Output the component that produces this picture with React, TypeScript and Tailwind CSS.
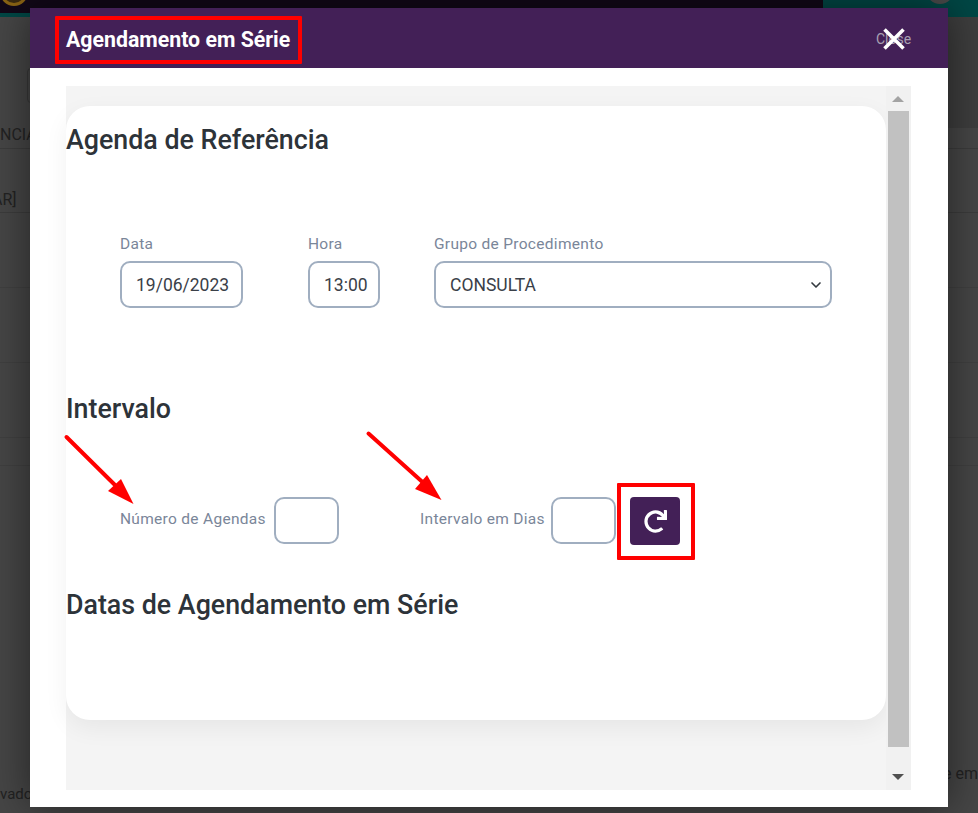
import React from "react";
import { FaRedo } from "react-icons/fa";
import { ChevronDown } from "lucide-react";

const inputClass =
  "h-[47px] rounded-[10px] border-2 border-[#a0aec0] bg-white pt-[1px] pr-0 pl-[14px] text-[17.5px] text-[#3a4048] outline-none";
const labelClass = "text-[15.5px] leading-[18px] tracking-[0.3px] text-[#7a8699]";
const headingClass = "text-[26.8px] leading-[32px] font-medium text-[#2d3339]";

const Field = ({ label, value, width }: { label: string; value: string; width: string }) => (
  <div className="flex flex-col">
    <label className={`mb-[8px] h-[18px] ${labelClass}`}>{label}</label>
    <input readOnly value={value} className={`${inputClass} ${width}`} />
  </div>
);

const Backdrop = () => (
  <div className="flex h-[813px] flex-col bg-[#464646] text-[#222222]">
    <div className="flex h-[13px] bg-[#120818]">
      <div className="flex-1" />
      <div className="w-[155px] bg-[#004745]" />
    </div>
    <div className="h-[4px] bg-[#004745]" />
    <div className="flex h-[132px] items-end justify-between border-b border-[#3c3c3c] pb-[1px] text-[16px]">
      <span>NCIA</span>
      <div className="mb-[-1px] h-[111px] w-[30px] self-start bg-[#3e3e3e]" />
    </div>
    <div className="flex h-[64px] items-end overflow-hidden border-b border-[#3c3c3c] text-[16px]">
      <span className="ml-[-8px]">AR]</span>
    </div>
    <div className="h-[75px] border-b border-[#404040]" />
    <div className="h-[75px] border-b border-[#404040]" />
    <div className="h-[75px] border-b border-[#404040]" />
    <div className="h-[28px] border-b border-[#404040]" />
    <div className="flex h-[320px] items-end justify-end text-[16px]">
      <span>e em</span>
    </div>
    <div className="mt-[-3px] flex-1 text-[15px]">
      <span>vado</span>
    </div>
  </div>
);

const Scrollbar = () => (
  <div className="flex w-[25px] shrink-0 flex-col items-center bg-[#f1f1f1] pr-[1px]">
    <div className="flex h-[25px] items-center">
      <div className="h-0 w-0 border-x-[6px] border-b-[6px] border-x-transparent border-b-[#a3a3a3]" />
    </div>
    <div className="w-[21px] flex-1 bg-[#c1c1c1]" />
    <div className="flex h-[43px] items-center pt-[17px]">
      <div className="h-0 w-0 border-x-[6px] border-t-[6px] border-x-transparent border-t-[#505050]" />
    </div>
  </div>
);

const Modal = () => (
  <div className="absolute top-[8px] left-[30px] flex h-[799px] w-[918px] flex-col bg-white shadow-[0_0_40px_rgba(0,0,0,0.5)]">
    <div className="flex h-[60px] shrink-0 items-center justify-between bg-[#432057] pr-[38px] pl-[36px]">
      <h5 className="pt-[4px] text-[21.3px] font-bold text-white">Agendamento em Série</h5>
      <div className="relative flex h-[24px] w-[33px] items-center justify-center pt-[2px]">
        <span className="text-[14px] text-[#a9a1b3]">Close</span>
        <svg viewBox="0 0 22 22" className="absolute top-[2px] left-[6px] h-[22px] w-[22px]">
          <path d="M1.5 1.5 L20.5 20.5 M20.5 1.5 L1.5 20.5" stroke="#ffffff" strokeWidth="3.6" fill="none" />
        </svg>
      </div>
    </div>

    <div className="mt-[18px] mr-[37px] ml-[36px] flex h-[704px] bg-[#f4f4f4]">
      <div className="flex-1 pt-[20px]">
        <div className="h-[614px] rounded-[24px] bg-white shadow-[0_8px_24px_rgba(0,0,0,0.06)]">
          <h3 className={`pt-[18px] ${headingClass}`}>Agenda de Referência</h3>
          <div className="mt-[79px] flex pl-[54px]">
            <Field label="Data" value="19/06/2023" width="w-[123px]" />
            <div className="ml-[65px]">
              <Field label="Hora" value="13:00" width="w-[72px]" />
            </div>
            <div className="ml-[54px] flex flex-col">
              <label className={`mb-[8px] h-[18px] ${labelClass}`}>Grupo de Procedimento</label>
              <div className={`${inputClass} flex w-[398px] items-center justify-between !pr-[6px]`}>
                <span>CONSULTA</span>
                <ChevronDown size={16} strokeWidth={2.5} className="text-[#343a40]" />
              </div>
            </div>
          </div>
          <h3 className={`mt-[85px] ${headingClass}`}>Intervalo</h3>
          <div className="mt-[72px] flex items-center pl-[54px]">
            <label className={`w-[154px] pb-[4px] ${labelClass}`}>Número de Agendas</label>
            <input readOnly className={`${inputClass} w-[65px] self-start`} />
            <label className={`ml-[81px] w-[131px] pb-[4px] ${labelClass}`}>Intervalo em Dias</label>
            <input readOnly className={`${inputClass} w-[65px] self-start`} />
            <button className="ml-[14px] flex h-[48px] w-[50px] items-center justify-center rounded-[4px] bg-[#432057] text-white">
              <FaRedo size={23} />
            </button>
          </div>
          <h3 className={`mt-[44px] ${headingClass}`}>Datas de Agendamento em Série</h3>
        </div>
      </div>
      <Scrollbar />
    </div>
  </div>
);

// marcações vermelhas feitas por cima da captura
const Annotations = () => (
  <>
    <div className="absolute top-[16px] left-[55px] h-[48px] w-[247px] rounded-[1px] border-4 border-[#ff0000]" />
    <div className="absolute top-[483px] left-[617px] h-[77px] w-[78px] rounded-[1px] border-4 border-[#ff0000]" />
    <svg className="absolute inset-0 h-[813px] w-[978px]" viewBox="0 0 978 813" fill="none">
      <path d="M66.5 437 L120 490" stroke="#ff0000" strokeWidth="4" strokeLinecap="round" />
      <path d="M133.5 504 L108 491 L121 479 Z" fill="#ff0000" />
      <path d="M368.5 433.5 L428 487" stroke="#ff0000" strokeWidth="4" strokeLinecap="round" />
      <path d="M441.5 500 L415 489 L427 475 Z" fill="#ff0000" />
    </svg>
  </>
);

export default function App() {
  return (
    <div className="relative h-[813px] w-[978px] overflow-hidden font-['Roboto',sans-serif]">
      <Backdrop />
      {/* restos da página atrás do modal */}
      <div className="absolute top-[-22px] left-0 h-[28px] w-[28px] rounded-full border-[3px] border-[#8a6414] bg-[#3a2a10]" />
      <div className="absolute top-[-24px] left-[926px] h-[28px] w-[28px] rounded-full bg-[#4a4a4a]" />
      <div className="absolute top-[68px] left-[27px] h-[35px] w-[12px] rounded-[4px] border border-[#383838]" />
      <Modal />
      <Annotations />
    </div>
  );
}
